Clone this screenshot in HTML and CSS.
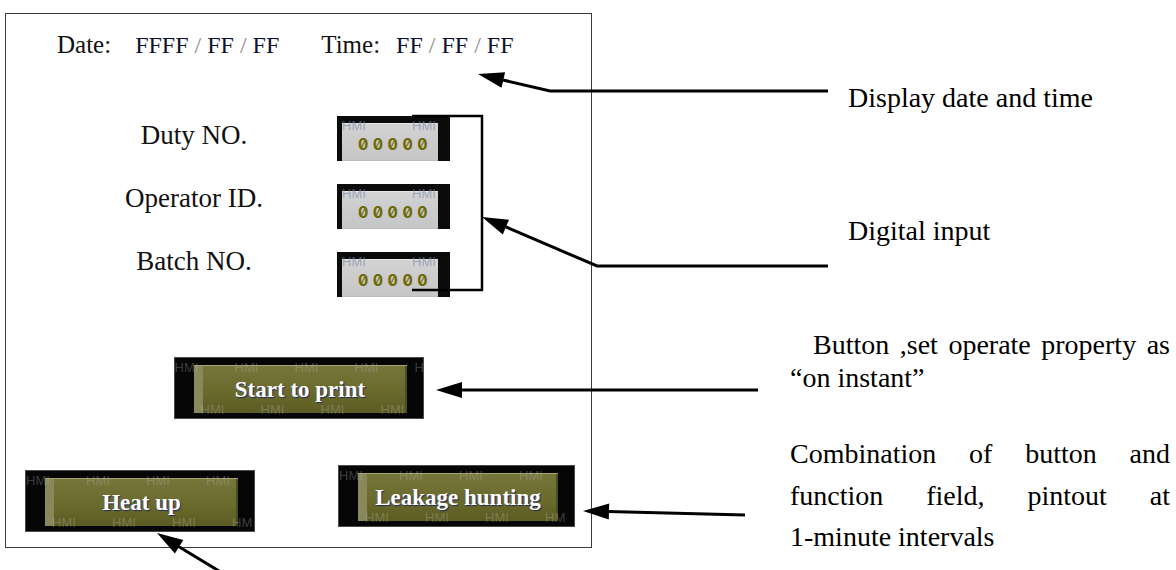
FILE: index.html
```html
<!DOCTYPE html>
<html lang="en">
<head>
  <meta charset="UTF-8">
  <meta name="viewport" content="width=device-width, initial-scale=1.0">
  <title>HMI print screen</title>
  <link rel="stylesheet" href="styles.css">
</head>
<body>
  <div class="sheet">
    <!-- HMI screen -->
    <div class="panel">
      <div class="clock">
        <span class="clock-label">Date:</span>
        <span class="clock-value date-value">FFFF <i>/</i> FF <i>/</i> FF</span>
        <span class="clock-label time-label">Time:</span>
        <span class="clock-value time-value">FF <i>/</i> FF <i>/</i> FF</span>
      </div>

      <div class="fields">
        <div class="field field-duty">
          <span class="field-name">Duty NO.</span>
          <div class="numbox">
            <div class="numface">00000</div>
            <span class="wm wm-a">HMI</span><span class="wm wm-b">HMI</span>
          </div>
        </div>
        <div class="field field-operator">
          <span class="field-name">Operator ID.</span>
          <div class="numbox">
            <div class="numface">00000</div>
            <span class="wm wm-a">HMI</span><span class="wm wm-b">HMI</span>
          </div>
        </div>
        <div class="field field-batch">
          <span class="field-name">Batch NO.</span>
          <div class="numbox">
            <div class="numface">00000</div>
            <span class="wm wm-a">HMI</span><span class="wm wm-b">HMI</span>
          </div>
        </div>
      </div>

      <div class="print-row">
        <div class="hmi-btn btn-print">
          <div class="btn-face"><span class="btn-text">Start to print</span></div>
          <div class="wm-row wm-top"><span>HMI</span><span>HMI</span><span>HMI</span><span>HMI</span><span>H</span></div>
          <div class="wm-row wm-bottom"><span>HMI</span><span>HMI</span><span>HMI</span><span>HMI</span></div>
        </div>
      </div>

      <div class="bottom-row">
        <div class="hmi-btn btn-heat">
          <div class="btn-face"><span class="btn-text">Heat up</span></div>
          <div class="wm-row wm-top"><span>HMI</span><span>HMI</span><span>HMI</span><span>HMI</span></div>
          <div class="wm-row wm-bottom"><span>HMI</span><span>HMI</span><span>HMI</span><span>HM</span></div>
        </div>
        <div class="hmi-btn btn-leak">
          <div class="btn-face"><span class="btn-text">Leakage hunting</span></div>
          <div class="wm-row wm-top"><span>HMI</span><span>HMI</span><span>HMI</span><span>HMI</span></div>
          <div class="wm-row wm-bottom"><span>HMI</span><span>HMI</span><span>HMI</span><span>HM</span></div>
        </div>
      </div>
    </div>

    <!-- annotations -->
    <div class="notes">
      <p class="note note-date">Display date and time</p>
      <p class="note note-input">Digital input</p>
      <p class="note note-button">
        <span class="line just indent">Button ,set operate property as</span>
        <span class="line">&ldquo;on instant&rdquo;</span>
      </p>
      <p class="note note-combo">
        <span class="line just">Combination of button and</span>
        <span class="line just">function field, pintout at</span>
        <span class="line">1-minute intervals</span>
      </p>
    </div>

    <!-- connectors -->
    <svg class="arrows" width="1176" height="570" viewBox="0 0 1176 570">
      <path d="M412 116 H482 V290 H412" fill="none" stroke="#000" stroke-width="2.5"/>
      <g fill="none" stroke="#000" stroke-width="3">
        <polyline points="828,91 550,91 503,80"/>
        <polyline points="828,266 597,266 506,227"/>
        <line x1="758" y1="390" x2="460" y2="390"/>
        <line x1="745" y1="515" x2="608" y2="511.6"/>
        <line x1="242" y1="585" x2="179" y2="546.7"/>
      </g>
      <g fill="#000">
        <polygon points="478,74 505.1,72.2 501.5,87.8"/>
        <polygon points="482,217 509,219.8 502.8,234.6"/>
        <polygon points="436,390 462,382 462,398"/>
        <polygon points="583,511 609.2,503.6 608.8,519.6"/>
        <polygon points="157,533 183.3,539.9 174.9,553.5"/>
      </g>
    </svg>
  </div>
</body>
</html>
```

FILE: styles.css
```css
* {
  box-sizing: border-box;
}

body {
  margin: 0;
  background: #fff;
  color: #000;
  font-family: "Liberation Serif", "Times New Roman", serif;
}

/* whole picture */
.sheet {
  position: relative;
  width: 1176px;
  height: 570px;
  display: flex;
  align-items: flex-start;
  padding: 13px 0 0 5px;
  overflow: hidden;
}

/* HMI screen frame */
.panel {
  flex: none;
  width: 587px;
  height: 535px;
  border: 1px solid #3a3a3a;
  padding-top: 16px;
}

/* date / time line */
.clock {
  display: flex;
  align-items: baseline;
  padding-left: 51px;
  font-size: 25px;
  line-height: 30px;
  color: #111;
}
.clock-value {
  font-size: 24px;
  color: #0d1030;
}
.clock-value i {
  font-style: normal;
  color: #8c8c8c;
}
.date-value {
  margin-left: 24px;
}
.time-label {
  margin-left: 42px;
}
.time-value {
  margin-left: 16px;
}

/* digital inputs */
.fields {
  display: flex;
  flex-direction: column;
  gap: 23px;
  margin-top: 56px;
}
.field {
  display: flex;
  align-items: center;
  height: 45px;
}
.field-name {
  width: 200px;
  margin-left: 88px;
  text-align: center;
  font-size: 27px;
  line-height: 30px;
  color: #111;
}
/* labels sit a little higher than the boxes, more so further down */
.field-duty .field-name {
  margin-bottom: 8px;
}
.field-operator .field-name {
  margin-bottom: 18px;
}
.field-batch .field-name {
  margin-bottom: 28px;
}
.numbox {
  position: relative;
  width: 113px;
  height: 45px;
  margin-left: 43px;
  padding: 7px 12px 0 5px;
  background: #0b0b0b;
}
.numface {
  height: 100%;
  display: flex;
  align-items: center;
  justify-content: center;
  padding: 3px 0 0 10px;
  background: linear-gradient(#d2d2d2, #c6c6c6);
  border-top: 1px solid #e6e6e6;
  border-bottom: 1px solid #bdbdbd;
  color: #6d6905;
  font-family: Inter, "DejaVu Sans Mono", monospace;
  font-size: 16px;
  font-weight: 700;
  font-variant-numeric: slashed-zero tabular-nums;
  letter-spacing: 4.5px;
}
.wm {
  position: absolute;
  top: 3px;
  font-family: "Liberation Sans", Arial, sans-serif;
  font-size: 13px;
  line-height: 13px;
  color: rgba(120, 132, 165, 0.6);
}
.wm-a {
  left: 5px;
}
.wm-b {
  left: 75px;
}

/* olive buttons */
.print-row {
  display: flex;
  justify-content: center;
  margin-top: 60px;
}
.bottom-row {
  display: flex;
  align-items: flex-start;
  gap: 83px;
  margin-top: 46px;
  padding-left: 19px;
}
.hmi-btn {
  position: relative;
  height: 62px;
  padding: 7px 16px 5px 19px;
  background: #060606;
  border: 1px solid #4a4a4a;
  overflow: hidden;
}
.btn-print {
  width: 250px;
}
.btn-heat {
  width: 230px;
  margin-top: 5px;
}
.btn-leak {
  width: 237px;
}
.btn-face {
  height: 100%;
  display: flex;
  align-items: center;
  justify-content: center;
  background: linear-gradient(#76763b, #6a6a2d 55%, #5c5c23);
  border-top: 1px solid #a3a374;
  box-shadow: inset 9px 0 0 #88885a, inset -2px 0 0 #4e4e1c;
}
.btn-text {
  position: relative;
  z-index: 1;
  color: #fff;
  font-size: 23px;
  font-weight: 700;
  text-shadow: 1px 1px 1px #1d2a5c;
}
.wm-row {
  position: absolute;
  display: flex;
  white-space: nowrap;
  font-family: "Liberation Sans", Arial, sans-serif;
  font-size: 13px;
  line-height: 14px;
  color: rgba(185, 185, 185, 0.32);
}
.wm-row span {
  flex: none;
  width: 60px;
}
.wm-row span:last-child {
  width: auto;
}
.wm-top {
  top: 3px;
  left: 0;
}
.wm-bottom {
  top: 45px;
  left: 26px;
}

/* annotations on the right */
.notes {
  flex: none;
  width: 380px;
  margin-left: 198px;
  display: flex;
  flex-direction: column;
}
.note {
  margin: 0;
  font-size: 28px;
  line-height: 34px;
}
.note-date {
  margin: 68px 0 0 58px;
}
.note-input {
  margin: 99px 0 0 58px;
}
.note-button {
  margin-top: 80px;
  line-height: 33px;
}
.note-combo {
  margin-top: 39px;
  line-height: 41.5px;
}
.line {
  display: block;
}
.just {
  text-align: justify;
  text-align-last: justify;
}
.indent {
  padding-left: 23px;
}

/* connector layer */
.arrows {
  position: absolute;
  top: 0;
  left: 0;
  pointer-events: none;
}
```
